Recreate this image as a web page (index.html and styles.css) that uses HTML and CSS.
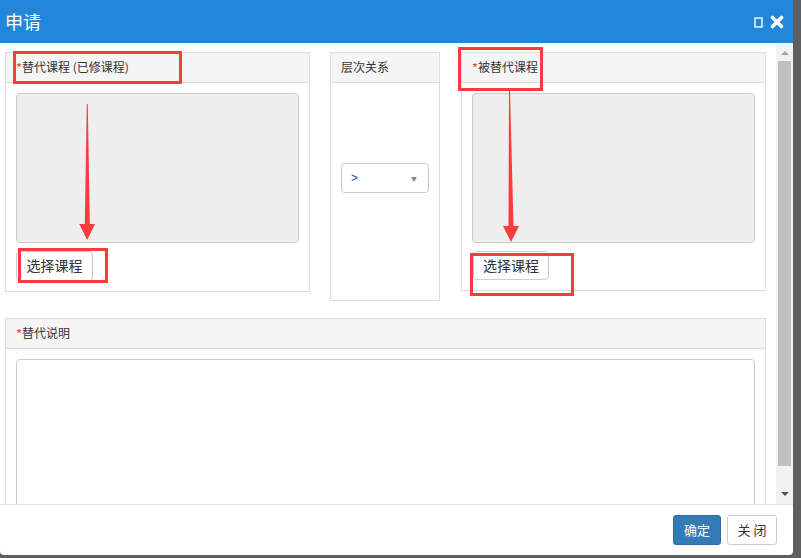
FILE: index.html
```html
<!DOCTYPE html>
<html lang="zh">
<head>
<meta charset="utf-8">
<title>申请</title>
<link rel="stylesheet" href="styles.css">
</head>
<body>
<div class="dialog">
  <div class="dlg-head">
    <span class="dlg-title">申请</span>
    <span class="dlg-tools">
      <svg class="ico-max" width="9" height="11" viewBox="0 0 9 11"><rect x="1" y="1" width="7" height="9" fill="none" stroke="#fff" stroke-width="1.4"/></svg>
      <svg class="ico-close" width="14" height="14" viewBox="0 0 14 14"><path d="M2.5 2.5 L11.5 11.5 M11.5 2.5 L2.5 11.5" stroke="#fff" stroke-width="3.6" stroke-linecap="round"/></svg>
    </span>
  </div>
  <div class="dlg-main">
    <div class="content">
      <div class="row-top">
        <div class="panel panel-course">
          <div class="panel-hd"><span class="req">*</span>替代课程 (已修课程)</div>
          <div class="panel-bd">
            <div class="course-box"></div>
            <button class="btn btn-pick">选择课程</button>
          </div>
        </div>
        <div class="panel panel-rel">
          <div class="panel-hd">层次关系</div>
          <div class="panel-bd rel-bd">
            <div class="select"><span class="sel-val">&gt;</span><span class="sel-caret"></span></div>
          </div>
        </div>
        <div class="panel panel-course">
          <div class="panel-hd"><span class="req">*</span>被替代课程</div>
          <div class="panel-bd">
            <div class="course-box"></div>
            <button class="btn btn-pick btn-pick2">选择课程</button>
          </div>
        </div>
      </div>
      <div class="panel panel-desc">
        <div class="panel-hd"><span class="req">*</span>替代说明</div>
        <div class="panel-bd">
          <div class="textarea"></div>
        </div>
      </div>
    </div>
    <div class="scrollbar">
      <span class="sb-up"></span>
      <span class="sb-thumb"></span>
      <span class="sb-down"></span>
    </div>
  </div>
  <div class="dlg-foot">
    <button class="btn btn-primary">确定</button>
    <button class="btn btn-default">关 闭</button>
  </div>
  <svg class="annot" width="793" height="555" viewBox="0 0 793 555">
    <g fill="none" stroke="#fb3b3e" stroke-width="3">
      <rect x="14.5" y="52.5" width="166" height="30"/>
      <rect x="19.5" y="249.5" width="87" height="32"/>
      <rect x="459.5" y="48.5" width="82" height="41"/>
      <rect x="471.5" y="254.5" width="101" height="40"/>
    </g>
    <g fill="#fb3b3e">
      <polygon points="86.8,104 87.8,104 89.8,224 95,224 87.2,240 79.2,224 84.8,224"/>
      <polygon points="509,91 510,91 513.5,226 519,226 511,242 503,226 508.5,226"/>
    </g>
  </svg>
</div>
</body>
</html>
```

FILE: styles.css
```css
* { box-sizing: border-box; }
html, body { margin: 0; padding: 0; }
body {
  width: 801px;
  height: 558px;
  overflow: hidden;
  background: #5e5e5e;
  font-family: "Noto Sans CJK SC", "Liberation Sans", sans-serif;
  color: #333;
}
.dialog {
  position: relative;
  width: 793px;
  height: 555px;
  background: #fff;
  border-radius: 0 0 4px 4px;
  display: flex;
  flex-direction: column;
  overflow: hidden;
}
.dlg-head {
  height: 43px;
  flex: none;
  background: #2286db;
  display: flex;
  align-items: center;
  padding: 0 9px 0 5px;
}
.dlg-title {
  color: #fff;
  font-size: 18px;
  line-height: 20px;
  margin-top: -2px;
}
.dlg-tools {
  margin-left: auto;
  display: flex;
  align-items: center;
  gap: 7px;
}
.ico-max { display: block; margin-top: 1px; }
.ico-close { display: block; }
.dlg-main {
  height: 461px;
  flex: none;
  display: flex;
}
.content {
  width: 776px;
  height: 461px;
  overflow: hidden;
  padding: 9px 10px 0 5px;
}
.row-top {
  display: flex;
  align-items: flex-start;
  gap: 20px;
}
.panel {
  border: 1px solid #ddd;
  background: #fff;
}
.panel-hd {
  height: 30px;
  background: #f5f5f5;
  border-bottom: 1px solid #ddd;
  padding: 0 10px;
  font-size: 12px;
  line-height: 28px;
  color: #333;
  white-space: nowrap;
}
.req {
  color: #e5472f;
  font-size: 13px;
  position: relative;
  top: 1px;
}
.panel-course { width: 305px; }
.panel-rel { width: 110px; }
.panel-rel + .panel-course { margin-left: 1px; }
.panel-bd {
  padding: 10px;
}
.course-box {
  height: 150px;
  background: #eee;
  border: 1px solid #ccc;
  border-radius: 4px;
}
.btn {
  font-family: "Noto Sans CJK SC", "Liberation Sans", sans-serif;
  display: inline-flex;
  align-items: center;
  justify-content: center;
  height: 30px;
  border-radius: 4px;
  cursor: pointer;
  padding: 0 0 2px;
}
.btn-pick {
  margin-top: 8px;
  width: 77px;
  background: #fff;
  border: 1px solid #ccc;
  color: #333;
  font-size: 14px;
  display: flex;
}
.btn-pick2 { width: 76px; margin-left: 1px; height: 29px; }
.rel-bd {
  height: 217px;
  padding-top: 80px;
}
.select {
  height: 30px;
  border: 1px solid #ccc;
  border-radius: 4px;
  display: flex;
  align-items: center;
  padding: 0 11px 0 9px;
}
.sel-val {
  color: #1f4f8f;
  font-size: 12px;
  font-family: "Liberation Sans", sans-serif;
}
.sel-caret {
  margin-left: auto;
  width: 0;
  height: 0;
  border-left: 3.5px solid transparent;
  border-right: 3.5px solid transparent;
  border-top: 5px solid #888;
  margin-top: 2px;
}
.panel-desc {
  margin-top: 17px;
  width: 761px;
}
.textarea {
  height: 200px;
  border: 1px solid #ccc;
  border-radius: 4px;
  background: #fff;
}
.scrollbar {
  width: 17px;
  height: 461px;
  background: #f4f1f4;
  display: flex;
  flex-direction: column;
  align-items: center;
}
.sb-up {
  margin-top: 8px;
  width: 0;
  height: 0;
  border-left: 4px solid transparent;
  border-right: 4px solid transparent;
  border-bottom: 4px solid #a3a3a3;
}
.sb-thumb {
  margin-top: 6px;
  width: 13px;
  height: 405px;
  background: #c1c0c3;
}
.sb-down {
  margin-top: 26px;
  width: 0;
  height: 0;
  border-left: 4px solid transparent;
  border-right: 4px solid transparent;
  border-top: 4px solid #505050;
}
.dlg-foot {
  flex: 1;
  border-top: 1px solid #e5e5e5;
  display: flex;
  justify-content: flex-end;
  align-items: flex-start;
  gap: 6px;
  padding: 10px 16px 0 0;
}
.btn-primary {
  width: 48px;
  background: #337ab7;
  border: 1px solid #2e6da4;
  color: #fff;
  font-size: 13px;
  border-radius: 3px;
}
.btn-default {
  width: 50px;
  background: #fff;
  border: 1px solid #ccc;
  color: #333;
  font-size: 13px;
  border-radius: 3px;
  white-space: pre;
}
.annot {
  position: absolute;
  left: 0;
  top: 0;
  pointer-events: none;
}
```
